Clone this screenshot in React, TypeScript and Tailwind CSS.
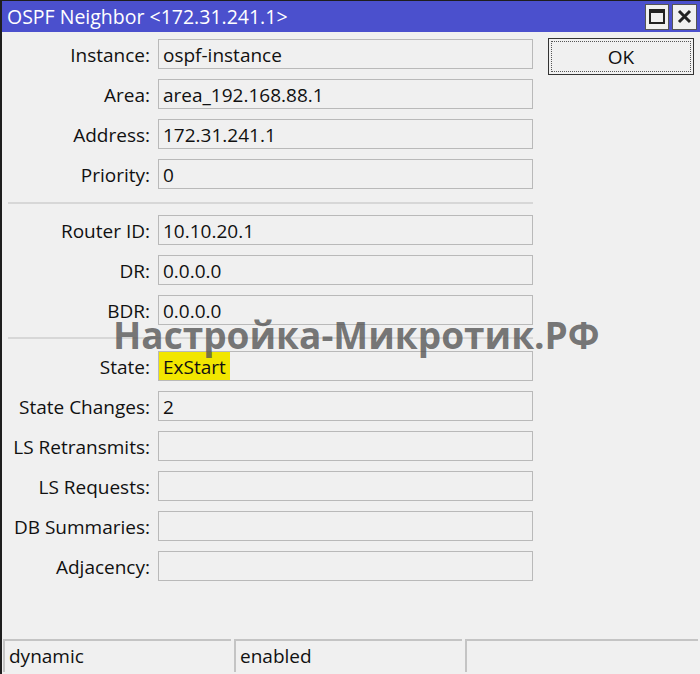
const section1 = [
  { label: "Instance", value: "ospf-instance" },
  { label: "Area", value: "area_192.168.88.1" },
  { label: "Address", value: "172.31.241.1" },
  { label: "Priority", value: "0" },
]

const section2 = [
  { label: "Router ID", value: "10.10.20.1" },
  { label: "DR", value: "0.0.0.0" },
  { label: "BDR", value: "0.0.0.0" },
]

const section3 = [
  { label: "State", value: "ExStart", highlight: true },
  { label: "State Changes", value: "2" },
  { label: "LS Retransmits", value: "" },
  { label: "LS Requests", value: "" },
  { label: "DB Summaries", value: "" },
  { label: "Adjacency", value: "" },
]

type Field = { label: string; value: string; highlight?: boolean }

function Row({ field }: { field: Field }) {
  return (
    <div className="flex items-center gap-2 h-[30px]">
      <div className="w-[142px] pt-[3px] text-right text-[19px] leading-none text-[#111] whitespace-nowrap">
        {field.label}:
      </div>
      <div className="flex items-stretch w-[375px] h-[30px] border border-[#b9b9b9] bg-[#f0f0f0] text-[19px] leading-none text-[#111]">
        {field.value && (
          <span className={field.highlight ? "flex items-center pt-[2px] px-[4px] bg-[#f2e600]" : "flex items-center pt-[2px] px-[4px]"}>
            {field.value}
          </span>
        )}
      </div>
    </div>
  )
}

function Section({ fields }: { fields: Field[] }) {
  return (
    <div className="flex flex-col gap-[10px]">
      {fields.map((f) => (
        <Row key={f.label} field={f} />
      ))}
    </div>
  )
}

function Separator() {
  return <div className="h-[2px] w-[525px] bg-[#d7d7d7]" />
}

export default function App() {
  return (
    <div className="relative w-[700px] h-[674px] bg-[#f0f0f0] border-l-2 border-t border-[#1e1e1e] flex flex-col font-['Open_Sans',sans-serif] overflow-hidden">
      {/* title bar */}
      <div className="flex items-center justify-between h-[31px] bg-[#4b50cd] pl-[5px] pr-[3px]">
        <span className="text-white text-[19.5px] leading-none">OSPF Neighbor &lt;172.31.241.1&gt;</span>
        <div className="flex gap-[3px]">
          <div className="flex items-center justify-center w-[24px] h-[26px] bg-[#f0f0f0] border border-[#555]">
            <div className="w-[16px] h-[15px] border-2 border-t-[4px] border-[#222]" />
          </div>
          <div className="flex items-center justify-center w-[25px] h-[26px] bg-[#f0f0f0] border border-[#555]">
            <svg width="15" height="15" viewBox="0 0 15 15">
              <path d="M2 2 L13 13 M13 2 L2 13" stroke="#222" strokeWidth="3" />
            </svg>
          </div>
        </div>
      </div>

      {/* body */}
      <div className="flex flex-1">
        <div className="flex flex-col pl-[6px] pt-[7px]">
          <Section fields={section1} />
          <div className="mt-[13px] mb-[11px]"><Separator /></div>
          <Section fields={section2} />
          <div className="mt-[12px] mb-[12px]"><Separator /></div>
          <Section fields={section3} />
        </div>
        <div className="ml-[15px] pt-[6px]">
          <button className="w-[146px] h-[37px] border border-[#333] bg-[#f0f0f0] p-[2px]">
            <div className="w-full h-full border border-dotted border-[#555] flex items-center justify-center pt-[2px] text-[19px] leading-none text-[#111]">
              OK
            </div>
          </button>
        </div>
      </div>

      {/* status bar */}
      <div className="flex gap-[3px] h-[33px] pl-[1px] pr-[2px] mb-[2px]">
        <div className="w-[228px] border-t-2 border-l-2 border-[#c4c4c4] flex items-center pl-[4px] text-[19px] leading-none text-[#111]">dynamic</div>
        <div className="w-[228px] border-t-2 border-l-2 border-[#c4c4c4] flex items-center pl-[4px] text-[19px] leading-none text-[#111]">enabled</div>
        <div className="flex-1 border-t-2 border-l-2 border-[#c4c4c4]" />
      </div>

      {/* watermark */}
      <div className="absolute left-[111px] top-[315px] text-[37px] font-bold leading-none text-[#555]/80 whitespace-nowrap pointer-events-none">
        Настройка-Микротик.РФ
      </div>
    </div>
  )
}
